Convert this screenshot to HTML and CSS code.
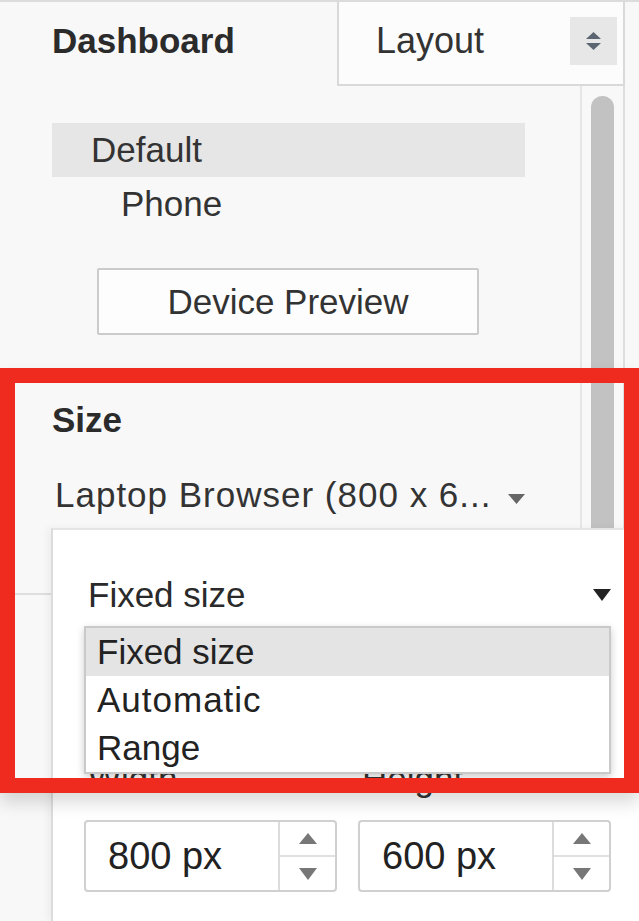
FILE: index.html
```html
<!DOCTYPE html>
<html>
<head>
<meta charset="utf-8">
<title>Dashboard Layout</title>
<link rel="stylesheet" href="styles.css">
</head>
<body>
<div class="panel">
  <div class="topbar">
    <div class="title">Dashboard</div>
    <div class="tab">
      <span class="tab-label">Layout</span>
      <span class="spin">
        <svg width="47" height="48" viewBox="0 0 47 48"><polygon points="16,22 23.5,15 31,22" fill="#5b6672"/><polygon points="16,26 23.5,33 31,26" fill="#5b6672"/></svg>
      </span>
    </div>
  </div>

  <div class="main">
    <div class="content">
      <ul class="devices">
        <li class="device active">Default</li>
        <li class="device sub">Phone</li>
      </ul>
      <button class="preview-btn">Device Preview</button>
      <div class="section-title">Size</div>
      <div class="size-select">Laptop Browser (800 x 6... <svg class="caret-sm" width="17" height="10" viewBox="0 0 17 10"><polygon points="0,0 17,0 8.5,10" fill="#666"/></svg></div>
      <div class="divider"></div>
    </div>
    <div class="scroll"><div class="thumb"></div></div>
  </div>

  <!-- size flyout -->
  <div class="flyout">
    <div class="fly-select">
      <span>Fixed size</span>
      <svg width="18" height="12" viewBox="0 0 18 12"><polygon points="0,0 18,0 9,12" fill="#222"/></svg>
    </div>
    <ul class="listbox">
      <li class="opt selected">Fixed size</li>
      <li class="opt wide">Automatic</li>
      <li class="opt">Range</li>
    </ul>
    <div class="fields">
      <div class="field-label">Width</div>
      <div class="field-label">Height</div>
    </div>
    <div class="fields inputs">
      <div class="num">
        <div class="num-val">800 px</div>
        <div class="num-step">
          <div class="step"><svg width="18" height="11" viewBox="0 0 18 11"><polygon points="0,11 9,0 18,11" fill="#777"/></svg></div>
          <div class="step down"><svg width="18" height="12" viewBox="0 0 18 12"><polygon points="0,0 18,0 9,12" fill="#777"/></svg></div>
        </div>
      </div>
      <div class="num">
        <div class="num-val">600 px</div>
        <div class="num-step">
          <div class="step"><svg width="18" height="11" viewBox="0 0 18 11"><polygon points="0,11 9,0 18,11" fill="#777"/></svg></div>
          <div class="step down"><svg width="18" height="12" viewBox="0 0 18 12"><polygon points="0,0 18,0 9,12" fill="#777"/></svg></div>
        </div>
      </div>
    </div>
  </div>

  <div class="highlight"></div>
</div>
</body>
</html>
```

FILE: styles.css
```css
body {margin:0;background:#f8f8f8;font-family:"Liberation Sans", Arial, sans-serif;font-size:35px;color:#333;}
.panel {position:relative;width:639px;height:921px;overflow:hidden;}

.topbar {display:flex;height:86px;border-top:2px solid #dcdcdc;box-sizing:border-box;}
.title {width:337px;box-sizing:border-box;padding:19px 0 0 52px;line-height:40px;font-weight:bold;color:#2b2b2b;}
.tab {width:288px;box-sizing:border-box;display:flex;padding:15px 6px 0 37px;background:#fcfcfc;border:2px solid #d9d9d9;border-top:0;}
.tab-label {flex:1;line-height:40px;margin-top:4px;font-size:36px;}
.spin {width:47px;height:48px;background:#e7e7e7;}
.spin svg {display:block;}

.main {display:flex;height:835px;}
.content {width:580px;box-sizing:border-box;padding-left:52px;}
.devices {margin:37px 0 0;padding:0;list-style:none;width:473px;}
.device {height:54px;line-height:54px;padding-left:39px;}
.device.active {background:#e6e6e6;}
.device.sub {padding-left:69px;}
.preview-btn {display:block;margin:37px 0 0 45px;width:382px;height:67px;padding:0;background:#fdfdfd;border:2px solid #cbcbcb;border-radius:2px;font-family:inherit;font-size:35px;color:#333;}
.section-title {margin-top:65px;line-height:40px;font-weight:bold;color:#2b2b2b;}
.size-select {margin-top:35px;padding-left:3px;line-height:40px;letter-spacing:1px;}
.caret-sm {margin-left:6px;vertical-align:3px;}
.divider {margin:78px 0 0 -52px;height:2px;background:#dedede;}

.scroll {width:45px;box-sizing:border-box;border-left:2px solid #e6e6e6;border-right:2px solid #dedede;}
.thumb {margin:10px 0 0 9px;width:23px;height:460px;border-radius:12px 12px 0 0;background:#c2c2c2;}

.flyout {position:absolute;left:51px;top:528px;right:0;bottom:0;padding:39px 28px 0 31px;background:#fff;border-top:2px solid #e4e4e4;border-left:2px solid #dcdcdc;box-shadow:-3px 0 8px rgba(0,0,0,0.05);}
.fly-select {display:flex;justify-content:space-between;align-items:center;height:52px;line-height:52px;padding-left:4px;color:#2a2a2a;}
.listbox {position:absolute;z-index:2;top:96px;left:31px;width:527px;box-sizing:border-box;margin:0;padding:0;list-style:none;background:#fff;border:2px solid #c9c9c9;box-shadow:0 3px 8px rgba(0,0,0,0.2);}
.opt {height:48px;line-height:48px;padding-left:11px;color:#222;}
.opt.selected {background:#e4e4e4;}
.opt.wide {letter-spacing:1px;}
.fields {display:grid;grid-template-columns:1fr 1fr;column-gap:21px;margin-top:138px;}
.field-label {line-height:40px;padding-left:4px;color:#333;}
.inputs {margin-top:21px;}
.num {display:flex;height:72px;box-sizing:border-box;border:2px solid #d0d0d0;border-radius:4px;}
.num-val {flex:1;padding-left:22px;font-size:38px;line-height:68px;color:#222;}
.num-step {width:55px;border-left:2px solid #dcdcdc;display:flex;flex-direction:column;}
.step {flex:1;display:flex;align-items:center;justify-content:center;}
.step.down {border-top:2px solid #e0e0e0;}
.step svg {display:block;}

.highlight {position:absolute;z-index:5;left:0;top:368px;width:639px;height:425px;box-sizing:border-box;border:15px solid #ef2a1f;box-shadow:0 10px 16px rgba(0,0,0,0.14);}
```
